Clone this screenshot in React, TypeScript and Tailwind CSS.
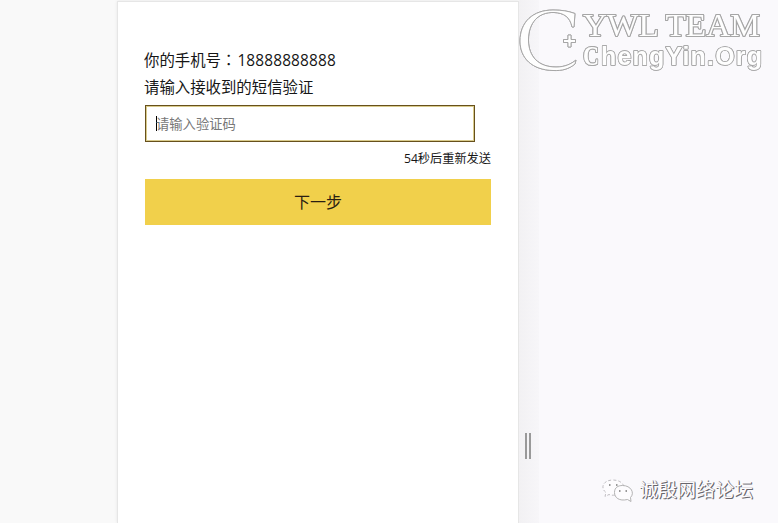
function TeamMark() {
  return (
    <svg
      className="absolute top-0 left-[515px] drop-shadow-[0.5px_0.5px_0.5px_rgba(0,0,0,0.35)]"
      width="263"
      height="85"
      viewBox="0 0 263 85"
      fill="#fefefe"
      stroke="#a6a6a6"
      strokeWidth="1"
      aria-hidden="true"
    >
      <path d="M60 13.500 L59 27 L57 27 C55 17 49 13 39 12.500 C23 12 13.500 23 13.500 40 C13.500 57 24 67 41 67 C50 67 56 64 61 60 L60 64 C54 69 47 71 38 70.500 C17 70 5 58 5 41 C5 22 18 10 38 10 C47 10 53 11 60 13.500 Z" />
      <path d="M53 35 h3 v4.500 h4.500 v3 h-4.500 v4.500 h-3 v-4.500 h-4.500 v-3 h4.500 Z" />
      <g strokeWidth="2" paintOrder="stroke" strokeLinejoin="round">
        <text x="68" y="36" fontFamily="Liberation Serif, serif" fontSize="30.5" fontWeight="400" textLength="177" lengthAdjust="spacingAndGlyphs">YWL TEAM</text>
        <text x="68" y="65" fontFamily="Liberation Serif, serif" fontSize="27" fontWeight="700" textLength="16" lengthAdjust="spacingAndGlyphs">C</text>
        <text x="86" y="65" fontFamily="Liberation Sans, sans-serif" fontSize="25" fontWeight="700" strokeWidth="1.6" textLength="161" lengthAdjust="spacing">hengYin.Org</text>
      </g>
    </svg>
  );
}

function ForumMark() {
  return (
    <div className="absolute top-[477px] left-[601px] flex items-center">
      <svg width="34" height="26" viewBox="0 0 34 26" fill="#fdfcfe" stroke="#b8b6ba" strokeWidth="0.9" aria-hidden="true">
        <path strokeDasharray="3 2" d="M14 18 C11 18.500 9.500 18 8 17.500 L4 19.500 L5 15.500 C-1 11 2 3 12 3 C18 3 22 6 22.500 9" />
        <path d="M29.500 20.500 L30 24.500 L26.500 22.500 C18 24.500 13.500 20.500 13.500 15.500 C13.500 10.500 17 8.500 21.500 8.500 C30 8.500 34 16 29.500 20.500 Z" stroke="#aaa" />
        <path d="M8 8h1.500M15 8h1.500M18 14h1.500M24.500 14h1.500" stroke="#777" strokeWidth="1.3" />
      </svg>
      <span className="ml-[4px] text-[19px] leading-[26px] text-[#fcfbfd] [text-shadow:1px_1px_0_#68666c,1px_0_0_#89878d]">诚殷网络论坛</span>
    </div>
  );
}

export default function App() {
  return (
    <div className="relative flex h-[523px] w-[778px] overflow-hidden bg-[#f9f9f9] font-['Open_Sans','Noto_Sans_CJK_SC',sans-serif] text-[#161616]">
      <div className="w-[117px] shrink-0" />
      <main className="mt-px flex w-[402px] shrink-0 flex-col border border-b-0 border-[#e6e6e6] bg-white pr-[27px] pl-[26px] shadow-[0_0_3px_rgba(0,0,0,0.08)]">
        <p className="mt-[44px] h-[28px] text-[15.4px] leading-[27px] whitespace-nowrap">
          你的手机号<span className="font-['Noto_Sans_CJK_TC',sans-serif]">：</span>
          <span className="ml-px tracking-[0.15px]">18888888888</span>
        </p>
        <p className="h-[27px] text-[15.4px] leading-[27px] whitespace-nowrap">请输入接收到的短信验证</p>
        <div className="mt-[4px] ml-px flex h-[37px] w-[330px] items-center border-2 border-[#d9cb8c] bg-white pl-[9px] outline-1 -outline-offset-[1.5px] outline-[#67501c]">
          <span className="h-[15px] w-px bg-black" />
          <span className="-ml-px text-[13.3px] leading-5 text-[#777]">请输入验证码</span>
        </div>
        <p className="mt-[7px] h-5 text-right text-[12.2px] leading-5">54秒后重新发送</p>
        <button type="button" className="mt-[10px] ml-px h-[46px] w-[346px] bg-[#f1d04b] text-base text-[#2a1e12]">
          下一步
        </button>
      </main>
      <div className="flex w-[20px] shrink-0 justify-center bg-linear-to-r from-[#f2f1f3] to-[#f7f6f9]">
        <div className="mt-[433px] flex h-[26px] w-[6px] -translate-x-px justify-between">
          <span className="w-[2px] bg-[#999]" />
          <span className="w-[2px] bg-[#999]" />
        </div>
      </div>
      <div className="flex-1 bg-[#faf9fc]" />
      <TeamMark />
      <ForumMark />
    </div>
  );
}
